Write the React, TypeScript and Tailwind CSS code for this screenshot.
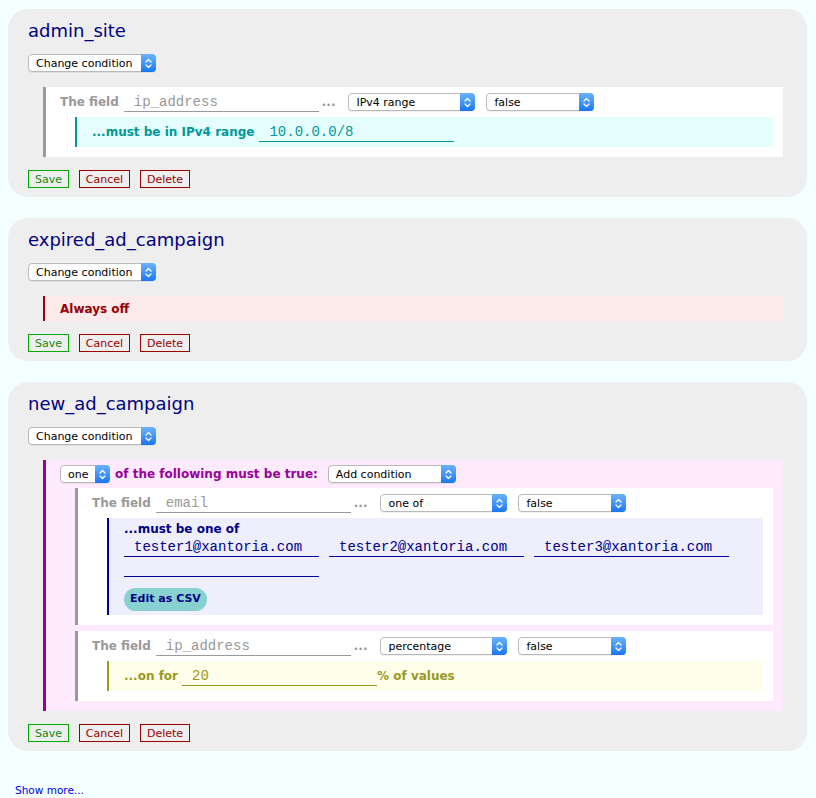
import type { ReactNode } from 'react';
import clsx from 'clsx';

// Fake mac-style select: white box with the blue stepper on the right.
function Select({ label, className }: { label: string; className?: string }) {
  return (
    <div
      className={clsx(
        'flex h-[18px] shrink-0 items-stretch rounded-[4px] border border-[#b9b9b9] bg-white text-[11px] leading-none text-black shadow-[0_1px_0_rgba(0,0,0,0.06)]',
        className
      )}
    >
      <span className="flex flex-1 items-center overflow-hidden whitespace-nowrap pl-[7px]">{label}</span>
      <span className="-my-px -mr-px flex w-[15px] items-center justify-center rounded-r-[4px] bg-gradient-to-b from-[#6ab2fb] to-[#1677f1]">
        <svg width="7" height="11" viewBox="0 0 7 11" fill="none" stroke="white" strokeWidth="1.3" strokeLinecap="round" strokeLinejoin="round">
          <path d="M1 4 L3.5 1.5 L6 4" />
          <path d="M1 7 L3.5 9.5 L6 7" />
        </svg>
      </span>
    </div>
  );
}

function Field({ value, className }: { value: string; className?: string }) {
  return (
    <input
      readOnly
      defaultValue={value}
      className={clsx(
        "h-[20px] w-[195px] shrink-0 border-b bg-transparent pl-[10px] font-['Liberation_Mono',monospace] text-[14px] leading-[20px] outline-none",
        className
      )}
    />
  );
}

function Buttons() {
  return (
    <div className="mt-[13px] flex gap-[10px] text-[11px] leading-none">
      <span className="flex h-[18px] w-[41px] items-center justify-center border border-[#00aa00] text-[#118a11]">Save</span>
      <span className="flex h-[18px] w-[51px] items-center justify-center border border-[#990000] text-[#990000]">Cancel</span>
      <span className="flex h-[18px] w-[50px] items-center justify-center border border-[#990000] text-[#990000]">Delete</span>
    </div>
  );
}

function Card({ title, children }: { title: string; children: ReactNode }) {
  return (
    <section className="rounded-[20px] bg-[#eeeeee] px-[20px] pb-[9px] pt-[11px]">
      <h2 className="text-[18px] leading-[22px] text-[#000080]">{title}</h2>
      <Select label="Change condition" className="mt-[12px] w-[128px]" />
      <div className="mt-[15px]">{children}</div>
      <Buttons />
    </section>
  );
}

function FieldBlock({ field, op, children }: { field: string; op: string; children: ReactNode }) {
  return (
    <div className="border-l-[3px] border-[#999999] bg-white pb-[10px] pl-[14px] pr-[10px] pt-[5px]">
      <div className="flex h-[20px] items-center">
        <span className="text-[12px] font-bold text-[#999999]">The field</span>
        <Field value={field} className="ml-[5px] border-[#999999] text-[#999999]" />
        <span className="ml-[3px] text-[12px] font-bold text-[#999999]">...</span>
        <Select label={op} className="ml-[13px] w-[127px]" />
        <Select label="false" className="ml-[11px] w-[108px]" />
      </div>
      <div className="ml-[15px] mt-[5px]">{children}</div>
    </div>
  );
}

export default function App() {
  return (
    <div className="min-h-screen bg-[#f3ffff] pb-[4px] pl-[8px] pr-[9px] pt-[9px] font-['DejaVu_Sans',sans-serif]">
      <div className="flex flex-col gap-[21px]">
        <Card title="admin_site">
          <div className="ml-[15px] mr-[4px]">
            <FieldBlock field="ip_address" op="IPv4 range">
              <div className="flex h-[30px] items-center border-l-2 border-[#009999] bg-[#e5fdfd] pl-[15px]">
                <span className="text-[12px] font-bold text-[#009999]">...must be in IPv4 range</span>
                <Field value="10.0.0.0/8" className="ml-[5px] border-[#009999] text-[#009999]" />
              </div>
            </FieldBlock>
          </div>
        </Card>

        <Card title="expired_ad_campaign">
          <div className="ml-[15px] mr-[4px] flex h-[25px] items-center border-l-2 border-[#990000] bg-[#fdeaea] pl-[15px] text-[12px] font-bold text-[#990000]">
            Always off
          </div>
        </Card>

        <Card title="new_ad_campaign">
          <div className="ml-[15px] mr-[4px] border-l-[3px] border-[#990099] bg-[#fdeafd] pb-[10px] pl-[14px] pr-[10px] pt-[5px]">
            <div className="flex items-center">
              <Select label="one" className="w-[50px]" />
              <span className="ml-[5px] text-[12px] font-bold text-[#990099]">of the following must be true:</span>
              <Select label="Add condition" className="ml-[10px] w-[128px]" />
            </div>
            <div className="ml-[15px] mt-[5px] flex flex-col gap-[6px]">
              <FieldBlock field="email" op="one of">
                <div className="border-l-2 border-[#000099] bg-[#eeeefc] pb-[4px] pl-[15px] pr-[10px] pt-[3px]">
                  <div className="text-[12px] font-bold leading-[16px] text-[#000088]">...must be one of</div>
                  <div className="flex flex-wrap gap-x-[10px]">
                    <Field value="tester1@xantoria.com" className="border-[#000099] text-[#000088]" />
                    <Field value="tester2@xantoria.com" className="border-[#000099] text-[#000088]" />
                    <Field value="tester3@xantoria.com" className="border-[#000099] text-[#000088]" />
                    <Field value="" className="border-[#000099] text-[#000088]" />
                  </div>
                  <span className="mt-[11px] flex h-[23px] w-[83px] items-center justify-center rounded-full bg-[#88d1d1] text-[11px] font-bold text-[#000080]">
                    Edit as CSV
                  </span>
                </div>
              </FieldBlock>
              <FieldBlock field="ip_address" op="percentage">
                <div className="flex h-[30px] items-center border-l-2 border-[#999922] bg-[#fefeeb] pl-[15px]">
                  <span className="text-[12px] font-bold text-[#999922]">...on for</span>
                  <Field value="20" className="ml-[4px] border-[#999922] text-[#999922]" />
                  <span className="text-[12px] font-bold text-[#999922]">% of values</span>
                </div>
              </FieldBlock>
            </div>
          </div>
        </Card>
      </div>

      <a href="#" className="ml-[7px] mt-[33px] block text-[10.5px] leading-[13px] text-[#0000ee]">
        Show more...
      </a>
    </div>
  );
}
